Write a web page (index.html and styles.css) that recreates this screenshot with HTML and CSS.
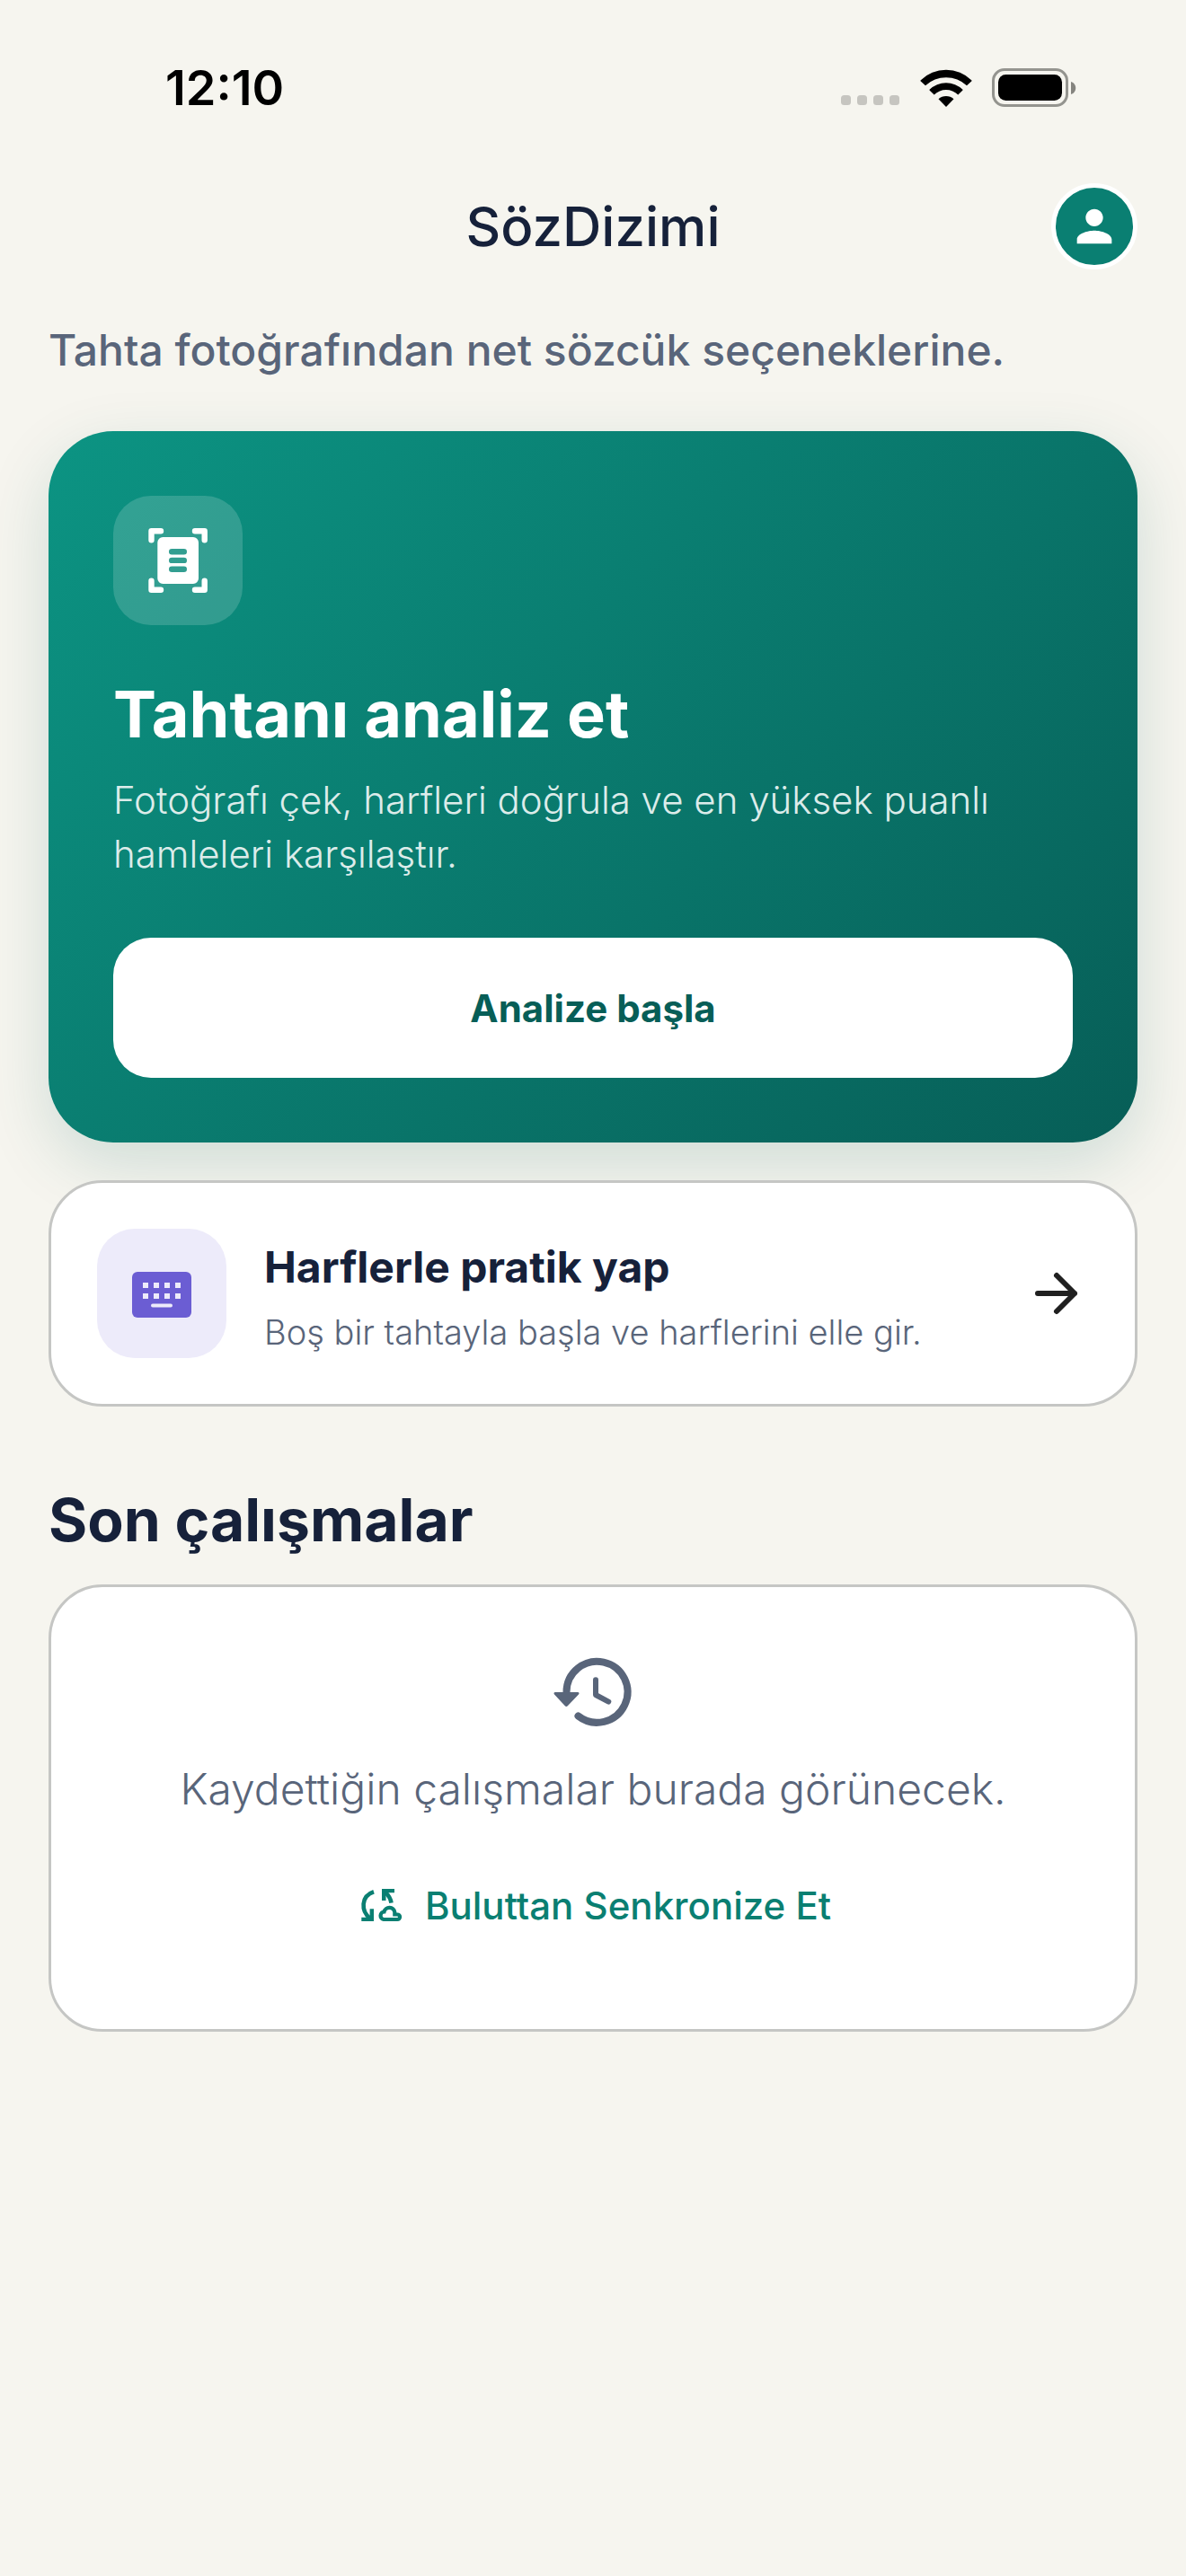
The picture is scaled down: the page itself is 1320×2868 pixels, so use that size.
FILE: index.html
```html
<!DOCTYPE html>
<html lang="tr">
<head>
<meta charset="utf-8">
<meta name="viewport" content="width=device-width, initial-scale=1">
<title>SözDizimi</title>
<link rel="stylesheet" href="styles.css">
</head>
<body>
<div class="status">
  <time class="clock">12:10</time>
  <div class="indicators">
    <svg class="signal" width="66" height="12" viewBox="0 0 66 12" aria-hidden="true"><g fill="#c6c5c0"><rect width="11" height="11" rx="3.5"/><rect x="18" width="11" height="11" rx="3.5"/><rect x="36" width="11" height="11" rx="3.5"/><rect x="54" width="11" height="11" rx="3.5"/></g></svg>
    <svg class="wifi" width="58" height="42" viewBox="0 0 58 42" aria-hidden="true"><path d="M0.5 12.5A40.500 40.500 0 0 1 57.500 12.500V13.300L52 18.300A33.500 33.500 0 0 0 6 18.300L.5 13.300Z"/><path d="M10.500 22.800A26.500 26.500 0 0 1 47.500 22.800V23.600L42.300 28.500A19 19 0 0 0 15.700 28.500L10.500 23.600Z"/><path d="M20.500 33.300A12.500 12.500 0 0 1 37.500 33.300L29 42Z"/></svg>
    <svg class="battery" width="94" height="44" viewBox="0 0 94 44" aria-hidden="true"><rect x="1.500" y="1.500" width="82" height="40" rx="12.500" fill="none" stroke="#94948f" stroke-width="3"/><rect x="7" y="7" width="71" height="29" rx="8.500"/><path d="M88 15c7 2 7 12 0 14Z" fill="#85847f"/></svg>
  </div>
</div>
<header class="appbar">
  <h1 class="appbar-title">SözDizimi</h1>
  <button class="avatar" type="button" aria-label="Profil">
    <svg width="58" height="58" viewBox="0 0 24 24" fill="#fff" aria-hidden="true"><path d="M12 12c2.210 0 4-1.790 4-4s-1.790-4-4-4-4 1.790-4 4 1.790 4 4 4zm0 2c-2.670 0-8 1.340-8 4v2h16v-2c0-2.660-5.330-4-8-4z"/></svg>
  </button>
</header>
<main class="content">
  <p class="tagline">Tahta fotoğrafından net sözcük seçeneklerine.</p>
  <section class="hero">
    <div class="tile tile-glass">
      <svg width="72" height="72" viewBox="0 0 72 72" aria-hidden="true">
        <path d="M6.500 13.300V3.200H17M55 3.200H65.700V13.300M6.500 58.700V68.800H17M55 68.800H65.700V58.700" fill="none" stroke="#fff" stroke-width="6.400" stroke-linecap="round" stroke-linejoin="round"/>
        <path fill="#fff" fill-rule="evenodd" d="M19.300 10H53a6 6 0 0 1 6 6V56a6 6 0 0 1-6 6H19.300a6 6 0 0 1-6-6V16a6 6 0 0 1 6-6ZM29.200 23a3.200 3.200 0 0 0 0 6.400H42.800a3.200 3.200 0 0 0 0-6.400ZM29.200 32.700a3.200 3.200 0 0 0 0 6.400H42.800a3.200 3.200 0 0 0 0-6.400ZM29.200 42.500a3.200 3.200 0 0 0 0 6.400H42.800a3.200 3.200 0 0 0 0-6.400Z"/>
      </svg>
    </div>
    <h2 class="hero-title">Tahtanı analiz et</h2>
    <p class="hero-text">Fotoğrafı çek, harfleri doğrula ve en yüksek puanlı hamleleri karşılaştır.</p>
    <button class="cta" type="button">Analize başla</button>
  </section>
  <button class="practice" type="button">
    <span class="tile tile-violet">
      <svg width="72" height="72" viewBox="0 0 72 72" aria-hidden="true">
        <rect x="3" y="12" width="66" height="51" rx="6" fill="#6b5dd3"/>
        <path fill="#edebfa" d="M15 24h6v6h-6zM27 24h6v6h-6zM39 24h6v6h-6zM51 24h6v6h-6zM15 36h6v6h-6zM27 36h6v6h-6zM39 36h6v6h-6zM51 36h6v6h-6z"/>
        <rect x="24" y="47.500" width="24" height="4" rx="2" fill="#edebfa"/>
      </svg>
    </span>
    <span class="practice-copy">
      <span class="practice-title">Harflerle pratik yap</span>
      <span class="practice-text">Boş bir tahtayla başla ve harflerini elle gir.</span>
    </span>
    <svg width="72" height="72" viewBox="0 0 72 72" fill="none" stroke="#202020" stroke-width="6" stroke-linecap="round" stroke-linejoin="round" aria-hidden="true"><path d="M15 36H56M36 16L56 36L36 56"/></svg>
  </button>
  <h2 class="section-title">Son çalışmalar</h2>
  <section class="empty">
    <svg width="96" height="96" viewBox="0 0 96 96" aria-hidden="true">
      <g fill="none" stroke="#59657a" stroke-linecap="round" stroke-linejoin="round">
        <path stroke-width="8" d="M18.500 51V48A34 34 0 1 1 31.500 74.500"/>
        <path stroke-width="6" d="M51 34.300V51L65.300 58.700"/>
      </g>
      <path fill="#59657a" d="M6 48H31Q33.500 48.500 32 50.500L20 63Q18.300 65 16.600 63L5 50.500Q3.500 48.500 6 48Z"/>
    </svg>
    <p class="empty-text">Kaydettiğin çalışmalar burada görünecek.</p>
    <button class="sync" type="button">
      <svg width="54" height="54" viewBox="0 0 54 54" aria-hidden="true">
        <g fill="none" stroke="#0a7f72">
          <path stroke-width="4.600" d="M21 12.200C6.500 17 6.500 33.500 17 42"/>
          <path stroke-width="4.600" d="M34 13Q39.500 18 40.500 24.700"/>
          <path stroke-width="4.200" d="M32 43A4.300 4.300 0 0 1 32.500 34.500A6 6 0 0 1 44.300 35V37.500H47.300A2.700 2.700 0 0 1 47.300 43Z"/>
        </g>
        <path fill="#0a7f72" d="M7.300 40.800H16.600V31.300H21V45H7.300ZM30 9H44V13.200H34.500V22H30Z"/>
      </svg>
      Buluttan Senkronize Et
    </button>
  </section>
</main>
</body>
</html>
```
FILE: styles.css
```css
* { box-sizing: border-box; }
body { margin: 0; min-height: 100vh; background: #f6f5ef; color: #16213a; font-family: Inter, "Noto Sans", sans-serif; }
h1, h2, p { margin: 0; }
button { margin: 0; border: 0; padding: 0; background: none; color: inherit; font-family: inherit; cursor: pointer; }
svg { display: block; flex: none; }

.status { display: flex; justify-content: space-between; align-items: center; height: 186px; padding: 10px 122px 0 184px; color: #000; }
.clock { font-size: 54px; line-height: 64px; font-weight: 600; }
.indicators { display: flex; align-items: center; gap: 22px; }
.signal { margin-top: 28px; }

.appbar { display: grid; grid-template-columns: 96px 1fr 96px; align-items: center; height: 132px; padding: 0 54px; }
.appbar-title { grid-column: 2; text-align: center; font-size: 60px; line-height: 72px; font-weight: 500; }
.avatar { display: grid; place-items: center; width: 96px; height: 96px; border: 5px solid #fff; border-radius: 50%; background: #0a7f72; }

.content { display: flex; flex-direction: column; padding: 36px 54px; }
.tagline { font-size: 48px; line-height: 72px; font-weight: 500; color: #59657a; }

.hero { margin-top: 54px; padding: 72px; border-radius: 72px; background: linear-gradient(135deg, #0c9483, #075e57); box-shadow: 0 24px 72px rgba(7, 94, 87, .16); color: #fff; }
.tile { display: grid; place-items: center; flex: none; width: 144px; height: 144px; border-radius: 42px; }
.tile-glass { background: rgba(255, 255, 255, .16); }
.tile-violet { background: #edebfa; }
.hero-title { margin-top: 51px; font-size: 72px; line-height: 96px; font-weight: 700; }
.hero-text { margin-top: 18px; font-size: 42px; line-height: 60px; font-weight: 300; color: #dcecea; }
.cta { display: block; width: 100%; height: 156px; margin-top: 63px; border-radius: 42px; background: #fff; color: #075e57; font-size: 42px; font-weight: 700; }

.practice { position: relative; display: flex; align-items: center; gap: 42px; margin-top: 42px; padding: 51px; border: 3px solid #c5c6c4; border-radius: 60px; background: #fff; text-align: left; }
.practice-copy { display: flex; flex-direction: column; flex: 1; gap: 12px; padding-top: 8px; }
.practice-title { font-size: 48px; line-height: 66px; font-weight: 700; }
.practice-text { font-size: 38px; line-height: 54px; font-weight: 300; color: #59657a; }

.section-title { margin-top: 84px; font-size: 66px; line-height: 84px; font-weight: 700; }
.empty { display: flex; flex-direction: column; align-items: center; margin-top: 30px; padding: 69px 51px 66px; border: 3px solid #c5c6c4; border-radius: 60px; background: #fff; }
.empty-text { margin-top: 24px; font-size: 48px; line-height: 72px; font-weight: 300; color: #59657a; }
.sync { display: flex; align-items: center; gap: 24px; height: 144px; margin-top: 21px; color: #0a7f72; font-size: 42px; font-weight: 500; }
```
